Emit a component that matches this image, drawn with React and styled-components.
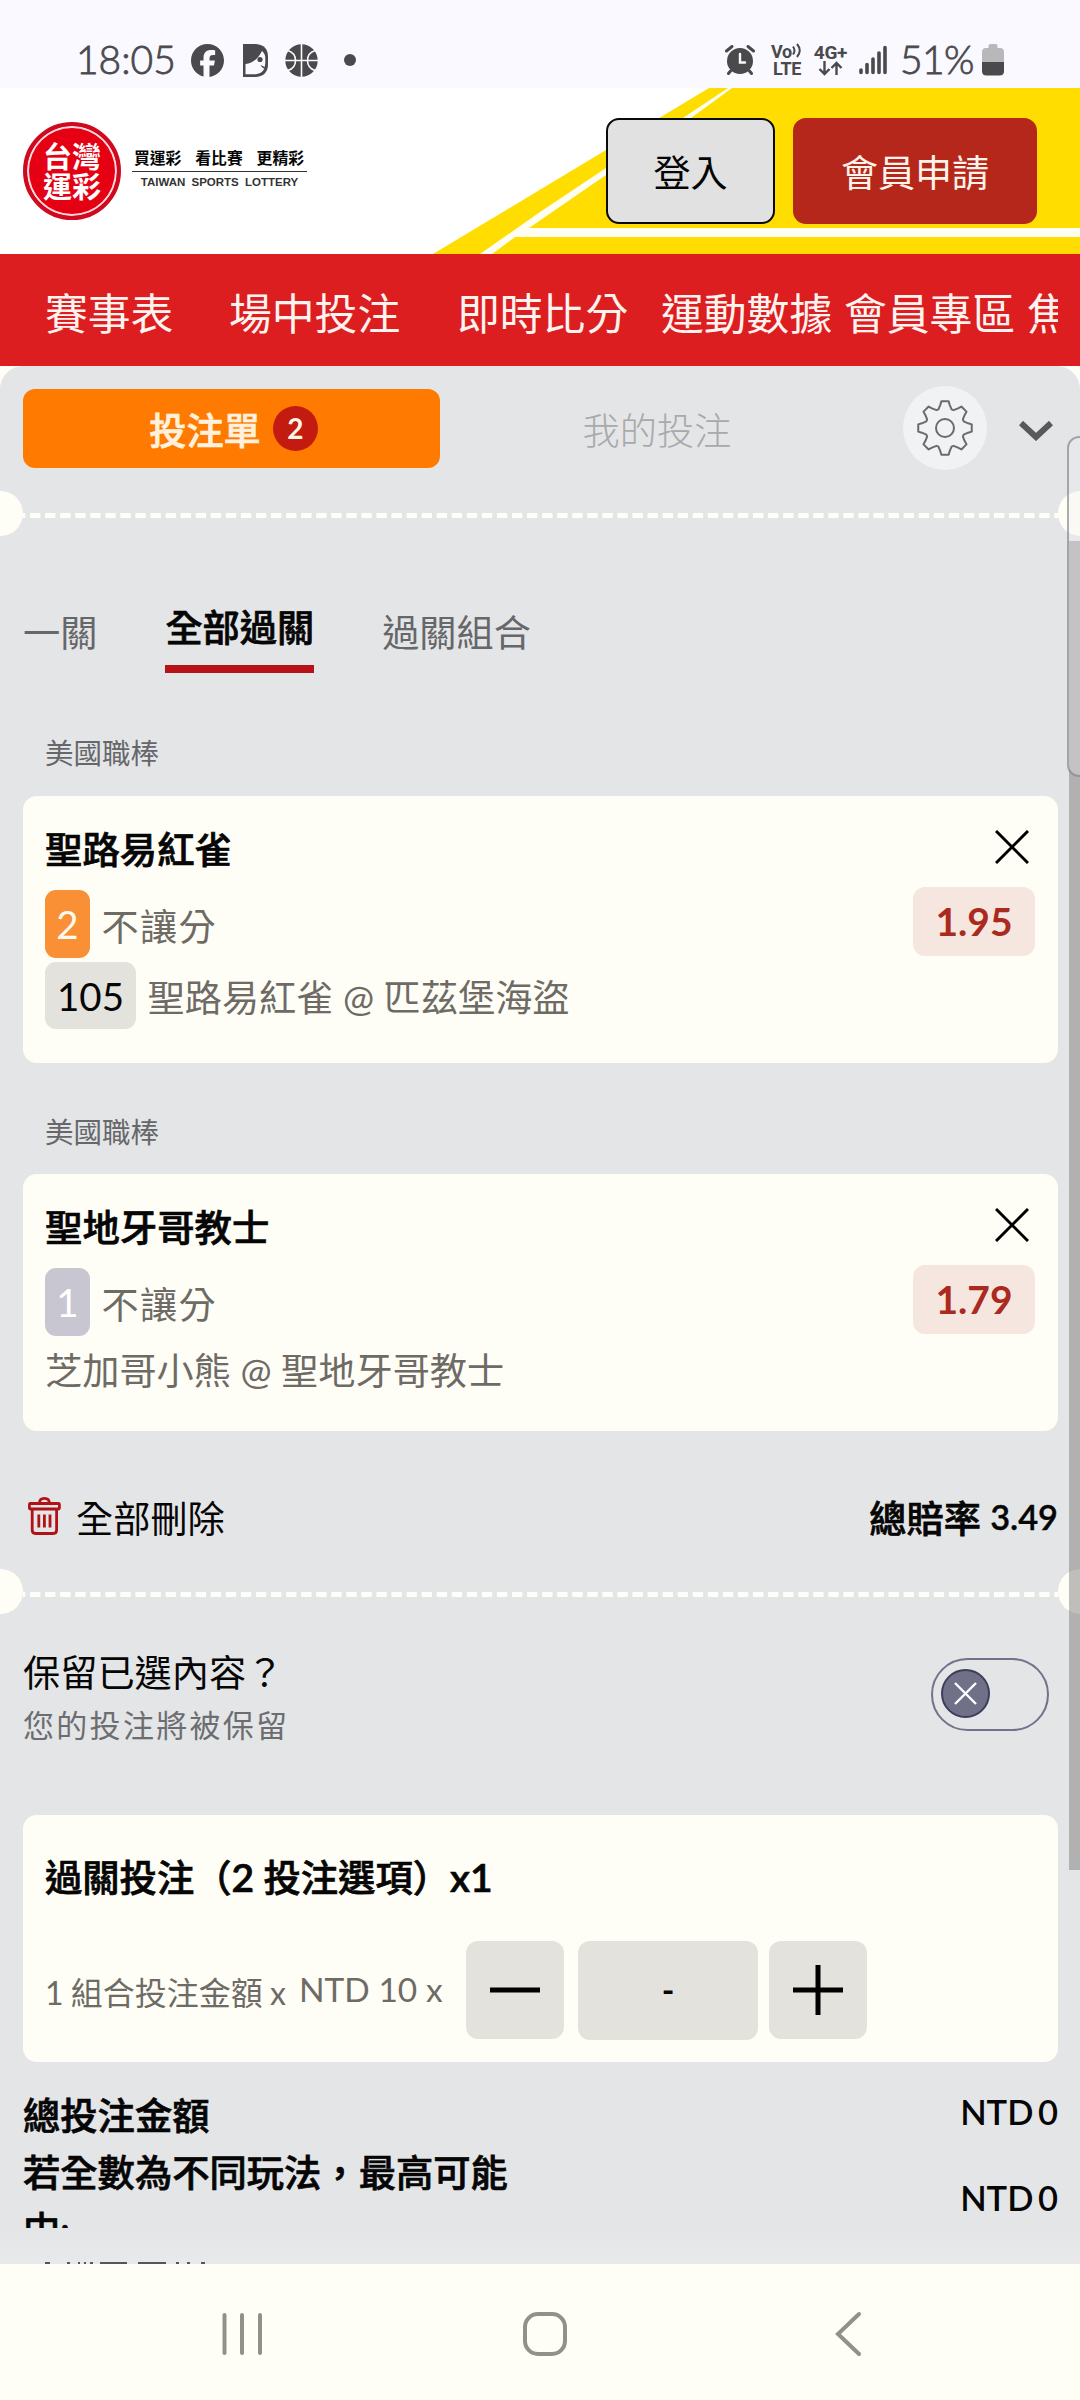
import React from "react";
import styled, { createGlobalStyle, css } from "styled-components";
import { FaFacebook } from "react-icons/fa6";

const sans = '"Lato", "Noto Sans CJK TC", sans-serif';
const ivory = "#fffef6";

const GlobalStyle = createGlobalStyle`
  * { box-sizing: border-box; }
  body { margin: 0; background: ${ivory}; font-family: ${sans}; }
  button { font-family: inherit; padding: 0; border: 0; background: none; }
`;

/* Medium glyphs thickened slightly: sits between the 500 and 700 weights. */
const strongText = css`
  font-weight: 500;
  -webkit-text-stroke: 0.7px currentColor;
`;

const Screen = styled.div`
  width: 1080px;
  height: 2400px;
  overflow: hidden;
  position: relative;
  display: flex;
  flex-direction: column;
  background: ${ivory};
  color: #060606;
`;

/* ---------- status bar ---------- */
const StatusBar = styled.div`
  height: 88px;
  flex: none;
  background: #f9f9ff;
  display: flex;
  justify-content: space-between;
  padding: 33px 76px 0 76px;
  color: #4a4a4c;
`;
const StatusGroup = styled.div`
  display: flex;
  align-items: center;
  height: 54px;
`;
const StatusText = styled.span`
  font-size: 39px;
  line-height: 54px;
  font-weight: 300;
  -webkit-text-stroke: 0.8px #4a4a4c;
  width: ${(p) => p.$w}px;
  letter-spacing: ${(p) => p.$ls || 0}px;
  white-space: nowrap;
  margin-top: -3px;
`;
const IconSlot = styled.span`
  display: flex;
  margin-left: ${(p) => p.$gap}px;
`;
const NetLabel = styled.span`
  display: flex;
  flex-direction: column;
  align-items: center;
  width: ${(p) => p.$w}px;
  margin-left: ${(p) => p.$gap}px;
  font: 700 ${(p) => p.$size}px/17px "Roboto", sans-serif;
  letter-spacing: -0.3px;
  white-space: nowrap;
`;

/* ---------- site header ---------- */
const Header = styled.header`
  height: 166px;
  flex: none;
  background: #fff;
  position: relative;
  display: flex;
  justify-content: space-between;
  padding: 30px 43px 0 23px;
`;
const HeaderArt = styled.svg`
  position: absolute;
  inset: 0;
`;
const Brand = styled.div`
  display: flex;
  margin-top: 4px;
  height: 98px;
`;
const Seal = styled.div`
  width: 98px;
  height: 98px;
  border-radius: 50%;
  background: #e60013;
  border: 4px solid #cf0a20;
  box-shadow: inset 0 0 0 2px #ffd9dc;
  color: #fff;
  display: flex;
  flex-direction: column;
  align-items: center;
  justify-content: center;
  padding-bottom: 2px;
  font: 700 29px/30px "Noto Sans CJK TC", sans-serif;
`;
const Slogan = styled.div`
  margin-left: 11px;
  width: 175px;
  padding-top: 25px;
`;
const SloganTop = styled.div`
  display: flex;
  justify-content: space-between;
  font: 700 15.8px/22px "Noto Sans CJK TC", sans-serif;
  padding: 0 3px 2px 2px;
  border-bottom: 1px solid #333;
`;
const SloganBottom = styled.div`
  font: 700 11.5px/21px "Liberation Sans", sans-serif;
  word-spacing: 3px;
  white-space: nowrap;
  text-align: center;
  color: #333;
`;
const HeaderActions = styled.div`
  display: flex;
  gap: 18px;
  position: relative;
`;
const HeaderButton = styled.button`
  height: 106px;
  width: ${(p) => p.$w}px;
  border-radius: 13px;
  font-size: 37px;
  line-height: 40px;
  padding-top: 3px;
  background: ${(p) => (p.$primary ? "#b5271a" : "#e1e1e1")};
  color: ${(p) => (p.$primary ? "#fff3ea" : "#050505")};
  border: 2px solid ${(p) => (p.$primary ? "#b5271a" : "#0a0a0a")};
`;

const NavBar = styled.nav`
  height: 112px;
  flex: none;
  background: #dc1e20;
  display: flex;
  padding: 4px 22px 0 45px;
`;
const NavTrack = styled.div`
  flex: 1;
  display: flex;
  overflow: hidden;
`;
const NavItem = styled.span`
  flex: none;
  width: ${(p) => p.$w}px;
  font-size: 42.8px;
  line-height: 112px;
  color: #fff3f0;
  white-space: nowrap;
`;

/* ---------- slip ---------- */
const Slip = styled.main`
  flex: 1;
  min-height: 0;
  background: #e4e5e7;
  border-radius: 23px 23px 0 0;
  overflow: hidden;
  padding-top: 20px;
  position: relative;
`;
const SlipHeader = styled.div`
  display: flex;
  align-items: center;
  height: 84px;
  padding-left: 23px;
`;
const SlipTab = styled.button`
  width: ${(p) => p.$w}px;
  height: 79px;
  border-radius: 12px;
  display: flex;
  align-items: center;
  justify-content: center;
  gap: 12px;
  padding-left: ${(p) => (p.$active ? 4 : 0)}px;
  font-size: 37.2px;
  font-weight: 300;
  background: ${(p) => (p.$active ? "#ff7a00" : "transparent")};
  color: ${(p) => (p.$active ? "#fff1de" : "#a8a9aa")};
`;
const TabText = styled.span`
  line-height: 44px;
  padding-top: 5px;
  ${(p) => p.$active && strongText}
`;
const Count = styled.span`
  width: 45px;
  height: 45px;
  border-radius: 50%;
  background: #c41b10;
  font-size: 28px;
  font-weight: 700;
  line-height: 44px;
  text-align: center;
  color: #fff6ea;
`;
const GearButton = styled.button`
  width: 84px;
  height: 84px;
  border-radius: 50%;
  background: #f1f2f4;
  margin-left: 29px;
  display: flex;
  align-items: center;
  justify-content: center;
`;
const ChevronButton = styled.button`
  margin-left: 32px;
  padding-top: 5px;
  display: flex;
`;

const TicketDivider = styled.div`
  display: flex;
  height: 45px;
  margin-top: ${(p) => p.$mt}px;
  overflow: hidden;
`;
const Notch = styled.i`
  flex: none;
  width: 45px;
  height: 45px;
  border-radius: 50%;
  background: ${ivory};
  margin: ${(p) => (p.$right ? "0 -23px 0 0" : "0 0 0 -22px")};
`;
const Dashes = styled.i`
  flex: 1;
  height: 5px;
  margin-top: ${(p) => p.$top}px;
  background: linear-gradient(90deg, #fffef8 10px, transparent 10px) 7px 0 / 15.07px 5px repeat-x;
`;

const TypeTabs = styled.div`
  display: flex;
  align-items: flex-start;
  gap: 68px;
  margin-top: 64px;
  padding-left: 23px;
`;
const TypeTab = styled.span`
  font-size: 37.2px;
  line-height: 56px;
  ${(p) => p.$active && strongText}
  color: ${(p) => (p.$active ? "#060606" : "#66676a")};
  margin-top: ${(p) => (p.$active ? 0 : 5)}px;
  padding-bottom: ${(p) => (p.$active ? 9 : 0)}px;
  border-bottom: ${(p) => (p.$active ? "8px solid #b71218" : "0")};
`;

const League = styled.div`
  margin-top: ${(p) => p.$mt}px;
  padding-left: 45px;
  font-size: 28.5px;
  line-height: 40px;
  color: #66676a;
`;
const Card = styled.section`
  margin: ${(p) => p.$mt}px 22px 0 23px;
  height: ${(p) => p.$h}px;
  border-radius: 14px;
  background: ${ivory};
  display: flex;
  justify-content: space-between;
  padding: 0 23px 0 22px;
`;
const Pick = styled.div`
  padding-top: 27px;
`;
const PickName = styled.div`
  font-size: 37.4px;
  ${strongText}
  line-height: 54px;
  margin-bottom: 13px;
`;
const PickLine = styled.div`
  display: flex;
  align-items: center;
  gap: 11.5px;
  height: ${(p) => p.$h}px;
  margin-bottom: 4px;
`;
const Tag = styled.span`
  height: ${(p) => p.$h || 68}px;
  min-width: 45px;
  padding: 0 ${(p) => p.$px}px;
  border-radius: 11px;
  font-size: 38.5px;
  line-height: 69px;
  text-align: center;
  background: ${(p) => p.$bg};
  color: ${(p) => p.$fg};
`;
const Muted = styled.span`
  font-size: 37.2px;
  letter-spacing: ${(p) => p.$ls || 0}px;
  line-height: 50px;
  padding-top: ${(p) => p.$pt || 0}px;
  color: #6e6b66;
  white-space: nowrap;
`;
const PickSide = styled.div`
  display: flex;
  flex-direction: column;
  align-items: flex-end;
  padding-top: 34px;
`;
const RemoveButton = styled.button`
  display: flex;
  margin: 0 6px 23px 0;
`;
const Odds = styled.span`
  width: 122px;
  height: 69px;
  border-radius: 12px;
  background: #f5e6df;
  color: #aa2a20;
  font-size: 39px;
  font-weight: 700;
  line-height: 69px;
  text-align: center;
`;

const SummaryRow = styled.div`
  display: flex;
  justify-content: space-between;
  align-items: center;
  height: 60px;
  margin-top: 56px;
  padding: 0 22px 0 28px;
`;
const ClearAll = styled.button`
  display: flex;
  align-items: center;
  gap: 15px;
  font-size: 37.2px;
  line-height: 60px;
  color: #060606;
`;
const TrashSlot = styled.span`
  display: flex;
  padding-bottom: 3px;
`;
const ClearText = styled.span`
  padding-top: 3px;
`;
const TotalOdds = styled.span`
  font-size: 37.2px;
  ${strongText}
  line-height: 60px;
  padding-top: 4px;
`;
const Figure = styled.span`
  font-size: 34.3px;
  font-weight: 600;
  -webkit-text-stroke: 0.4px currentColor;
  position: relative;
  top: -3px;
`;

const KeepRow = styled.div`
  display: flex;
  justify-content: space-between;
  margin-top: 32px;
  padding: 0 31px 0 23px;
`;
const KeepTitle = styled.div`
  font-size: 37.2px;
  line-height: 53px;
`;
const KeepNote = styled.div`
  font-size: 31px;
  letter-spacing: 2.3px;
  line-height: 53px;
  color: #6c6d70;
`;
const Toggle = styled.button`
  width: 118px;
  height: 73px;
  margin-top: 12px;
  border-radius: 37px;
  border: 2px solid #72728a;
  display: flex;
  align-items: center;
  padding: 0 0 2px 8px;
`;
const Knob = styled.span`
  width: 49px;
  height: 49px;
  border-radius: 50%;
  background: #707089;
  border: 2px solid #3f3e58;
  display: flex;
  align-items: center;
  justify-content: center;
`;

const StakeCard = styled.section`
  margin: 63px 22px 0 23px;
  height: 247px;
  border-radius: 14px;
  background: ${ivory};
  padding: 35px 22px 0;
`;
const StakeTitle = styled.div`
  font-size: 37.3px;
  ${strongText}
  height: 56px;
  line-height: 56px;
  margin-bottom: 35px;
`;
const Strong = styled.span`
  font-size: 39px;
  line-height: 1;
  font-weight: 600;
`;
const StakeRow = styled.div`
  display: flex;
  height: 99px;
  align-items: flex-start;
`;
const StakeLabel = styled.span`
  width: ${(p) => p.$w}px;
  font-size: ${(p) => p.$size}px;
  line-height: ${(p) => p.$lh}px;
  word-spacing: ${(p) => p.$ws || 0}px;
  color: #6e6b66;
  white-space: nowrap;
`;
const StepButton = styled.button`
  width: 98px;
  height: 98px;
  border-radius: 12px;
  background: #e4e2dd;
  display: flex;
  align-items: center;
  justify-content: center;
`;
const StakeValue = styled.span`
  width: 180px;
  height: 99px;
  margin: 0 11px 0 14px;
  border-radius: 12px;
  background: #e4e2dd;
  font-size: 34px;
  line-height: 98px;
  text-align: center;
  font-weight: 700;
`;

const Totals = styled.div`
  margin-top: 25px;
  height: 141px;
  overflow: hidden;
  padding: 0 22px 0 23px;
`;
const TotalRow = styled.div`
  display: flex;
  justify-content: space-between;
  align-items: center;
`;
const TotalName = styled.span`
  font-size: 37.3px;
  ${strongText}
  line-height: 57px;
  max-width: 500px;
`;
const TotalValue = styled.span`
  font-size: 34.5px;
  font-weight: 600;
  line-height: 48px;
  padding-bottom: 7px;
  word-spacing: -4px;
`;
const FadeEdge = styled.div`
  height: 36px;
  background: linear-gradient(#e4e5e7, #e8e9eb);
  display: flex;
  align-items: flex-end;
  padding-left: 23px;
`;

/* Overlays the slip along the right edge of the window. */
const ScrollThumb = styled.i`
  position: absolute;
  right: 0;
  top: 541px;
  width: 11px;
  height: 1329px;
  background: rgba(125, 125, 125, 0.5);
`;
const EdgeHandle = styled.i`
  position: absolute;
  right: -14px;
  top: 436px;
  width: 27px;
  height: 341px;
  border: 2px solid rgba(120, 120, 120, 0.6);
  border-radius: 12px;
  background: rgba(240, 240, 245, 0.3);
`;

const SystemNav = styled.footer`
  height: 136px;
  flex: none;
  background: ${ivory};
  display: flex;
  align-items: center;
  justify-content: space-between;
  padding: 4px 218px 0 220px;
`;
const NavButton = styled.button`
  display: flex;
  flex: none;
  margin-right: ${(p) => p.$mr || 0}px;
`;

/* ---------- icons ---------- */
const CharacterIcon = () => (
  <svg width="25" height="33" viewBox="0 0 25 33">
    <path d="M0 0H13Q25 1 25 13V20Q25 32 13 33H0Z" fill="#4a4a4c" />
    <path d="M2.500 20Q13 19 19 7Q22.300 10 22.300 14V19Q22 29.500 13 30.300H2.500Z" fill="#f9f9ff" />
    <circle cx="17" cy="15.500" r="2.600" fill="#4a4a4c" />
    <path d="M17.500 21L23 23.500V25Q19 24.500 17.500 21Z" fill="#4a4a4c" />
  </svg>
);
const BallIcon = () => (
  <svg width="33" height="33" viewBox="0 0 33 33">
    <circle cx="16.500" cy="16.500" r="16.200" fill="#4a4a4c" />
    <g fill="none" stroke="#f9f9ff" strokeWidth="1.600">
      <path d="M16.500 0V33M0 16.500H33" />
      <path d="M3 6.500Q10.500 9 10.500 16.500T3 26.500M30 6.500Q22.500 9 22.500 16.500T30 26.500" />
    </g>
  </svg>
);
const DotIcon = () => (
  <svg width="12" height="12"><circle cx="6" cy="6" r="6" fill="#4a4a4c" /></svg>
);
const AlarmIcon = () => (
  <svg width="30" height="30" viewBox="0 0 30 30" fill="none" stroke="#4a4a4c" strokeLinecap="round">
    <circle cx="15" cy="16" r="13" fill="#4a4a4c" stroke="none" />
    <path d="M1.500 6L7 1.500M28.500 6L23 1.500M5.500 26L3.500 28.500M24.500 26L26.500 28.500" strokeWidth="3" />
    <path d="M15 9V17.500H20" stroke="#f9f9ff" strokeWidth="2.400" />
  </svg>
);
const WavesIcon = () => (
  <svg width="11" height="15" viewBox="0 0 11 15" fill="none" stroke="#4a4a4c" strokeWidth="2">
    <path d="M1 3.500Q4 7.500 1 11.500M5 1Q10.500 7.500 5 14" />
  </svg>
);
const ArrowsIcon = () => (
  <svg width="26" height="15" viewBox="0 0 26 15" fill="none" stroke="#4a4a4c" strokeWidth="2.400">
    <path d="M6.500 0V13M1.500 8L6.500 13L11.500 8M18.500 14V2M13.500 7L18.500 2L23.500 7" />
  </svg>
);
const SignalIcon = () => (
  <svg width="28" height="30" viewBox="0 0 28 30" stroke="#4a4a4c" strokeWidth="3.600" strokeLinecap="round">
    <path d="M2 25V27.500M8 19.500V27.500M14 14V27.500M20 8V27.500M26 2.500V27.500" />
  </svg>
);
const BatteryIcon = () => (
  <svg width="22" height="32" viewBox="0 0 22 32">
    <path d="M6.500 2Q6.500 0 8.500 0H13.500Q15.500 0 15.500 2V4H18Q22 4 22 8V18H0V8Q0 4 4 4H6.500Z" fill="#b8b8bb" />
    <path d="M0 18H22V27Q22 31.500 17.500 31.500H4.500Q0 31.500 0 27Z" fill="#4a4a4c" />
  </svg>
);

const polar = (angle, radius) =>
  `${(28 + radius * Math.sin(angle)).toFixed(2)} ${(28 - radius * Math.cos(angle)).toFixed(2)}`;
const gearPath =
  Array.from({ length: 8 }, (_, i) => {
    const a = (i * Math.PI) / 4;
    return `${i ? "L" : "M"}${polar(a - 0.34, 19.800)}L${polar(a - 0.2, 23.600)}L${polar(a - 0.135, 27)}L${polar(a + 0.135, 27)}L${polar(a + 0.2, 23.600)}L${polar(a + 0.34, 19.800)}`;
  }).join("") + "Z";
const GearIcon = () => (
  <svg width="56" height="56" viewBox="0 0 56 56" fill="none" stroke="#6a6b6d" strokeWidth="2" strokeLinejoin="round">
    <path d={gearPath} />
    <circle cx="28" cy="28" r="9" />
  </svg>
);
const ChevronIcon = () => (
  <svg width="34" height="20" viewBox="0 0 34 20" fill="none" stroke="#58595b" strokeWidth="6">
    <path d="M2 2L17 16L32 2" />
  </svg>
);
const CrossIcon = ({ size, color, width }) => (
  <svg width={size} height={size} viewBox={`0 0 ${size} ${size}`} stroke={color} strokeWidth={width}>
    <path d={`M1 1L${size - 1} ${size - 1}M${size - 1} 1L1 ${size - 1}`} />
  </svg>
);
const TrashIcon = () => (
  <svg width="33" height="38" viewBox="0 0 33 38" fill="none" stroke="#b01217" strokeWidth="2.800">
    <rect x="1.400" y="6.500" width="30" height="5.500" rx="1" />
    <path d="M11.500 6Q11.500 1.400 16.400 1.400T21.300 6" />
    <path d="M4.200 12.500V33Q4.200 36.500 7.500 36.500H25.300Q28.600 36.500 28.600 33V12.500" />
    <path d="M10.800 17.500V30.500M16.400 17.500V30.500M22 17.500V30.500" />
  </svg>
);
const StepIcon = ({ plus }) => (
  <svg width="50" height="50" viewBox="0 0 50 50" stroke="#000" strokeWidth="5">
    <path d={plus ? "M0 25H50M25 0V50" : "M0 25H50"} />
  </svg>
);
const PeekMarks = () => (
  <svg width="190" height="2" viewBox="0 0 190 2" stroke="#55565a" strokeWidth="2">
    <path d="M22 1H27M44 1H47M55 1H57M61 1H63M67 1H70M77 1H104M115 1H143M153 1H156M164 1H167M178 1H182" />
  </svg>
);
const RecentsIcon = () => (
  <svg width="44" height="44" viewBox="0 0 44 44" stroke="#91908b" strokeWidth="4" strokeLinecap="round">
    <path d="M4.500 3V41M22 3V41M40 3V41" />
  </svg>
);
const HomeIcon = () => (
  <svg width="46" height="46" viewBox="0 0 46 46" fill="none" stroke="#91908b" strokeWidth="4">
    <rect x="3" y="3" width="40" height="40" rx="13" />
  </svg>
);
const BackIcon = () => (
  <svg width="28" height="46" viewBox="0 0 28 46" fill="none" stroke="#91908b" strokeWidth="4" strokeLinecap="round">
    <path d="M25 3L4 23L25 43" />
  </svg>
);

/* ---------- data ---------- */
const navItems = [
  ["賽事表", 184],
  ["場中投注", 228],
  ["即時比分", 204],
  ["運動數據", 183],
  ["會員專區", 183],
  ["焦點", 86],
];
const picks = [
  {
    league: "美國職棒", gapTop: 60, gapCard: 23, height: 267,
    name: "聖路易紅雀", no: "2", noBg: "#f99035", noFg: "#fffaf0",
    odds: "1.95", code: "105", match: "聖路易紅雀 @ 匹茲堡海盜",
  },
  {
    league: "美國職棒", gapTop: 49, gapCard: 22, height: 257,
    name: "聖地牙哥教士", no: "1", noBg: "#c8c6d0", noFg: "#ffffff",
    odds: "1.79", match: "芝加哥小熊 @ 聖地牙哥教士",
  },
];

const Divider = ({ mt, top }) => (
  <TicketDivider $mt={mt}>
    <Notch />
    <Dashes $top={top} />
    <Notch $right />
  </TicketDivider>
);

const PickCard = ({ pick }) => (
  <>
    <League $mt={pick.gapTop}>{pick.league}</League>
    <Card $h={pick.height} $mt={pick.gapCard}>
      <Pick>
        <PickName>{pick.name}</PickName>
        <PickLine $h={68}>
          <Tag $px={11} $bg={pick.noBg} $fg={pick.noFg}>{pick.no}</Tag>
          <Muted $ls={1.3} $pt={5}>不讓分</Muted>
        </PickLine>
        <PickLine $h={pick.code ? 67 : 62}>
          {pick.code && <Tag $px={12} $h={67} $bg="#e4e2dd" $fg="#060606">{pick.code}</Tag>}
          <Muted $pt={pick.code ? 4 : 0}>{pick.match}</Muted>
        </PickLine>
      </Pick>
      <PickSide>
        <RemoveButton><CrossIcon size={34} color="#000" width={3} /></RemoveButton>
        <Odds>{pick.odds}</Odds>
      </PickSide>
    </Card>
  </>
);

export default function App() {
  return (
    <Screen>
      <GlobalStyle />
      <StatusBar>
        <StatusGroup>
          <StatusText $w={100}>18:05</StatusText>
          <IconSlot $gap={15}><FaFacebook size={33} /></IconSlot>
          <IconSlot $gap={19}><CharacterIcon /></IconSlot>
          <IconSlot $gap={17}><BallIcon /></IconSlot>
          <IconSlot $gap={26}><DotIcon /></IconSlot>
        </StatusGroup>
        <StatusGroup>
          <IconSlot $gap={0}><AlarmIcon /></IconSlot>
          <NetLabel $w={32} $gap={16} $size={18}>
            <span>Vo<WavesIcon /></span>
            <span>LTE</span>
          </NetLabel>
          <NetLabel $w={33} $gap={11} $size={19}>
            <span>4G+</span>
            <ArrowsIcon />
          </NetLabel>
          <IconSlot $gap={12}><SignalIcon /></IconSlot>
          <IconSlot $gap={13}><StatusText $w={75} $ls={-0.6}>51%</StatusText></IconSlot>
          <IconSlot $gap={7}><BatteryIcon /></IconSlot>
        </StatusGroup>
      </StatusBar>

      <Header>
        <HeaderArt width="1080" height="166" viewBox="0 0 1080 166">
          <path d="M433 166L709 0H1080V166Z" fill="#ffdd00" />
          <path d="M480 166L540 124L606 80L683 30L728 0H732L691 30L606 87L529 140H1080V149H515L492 166Z" fill="#fffef2" />
        </HeaderArt>
        <Brand>
          <Seal><span>台灣</span><span>運彩</span></Seal>
          <Slogan>
            <SloganTop><span>買運彩</span><span>看比賽</span><span>更精彩</span></SloganTop>
            <SloganBottom>TAIWAN SPORTS LOTTERY</SloganBottom>
          </Slogan>
        </Brand>
        <HeaderActions>
          <HeaderButton $w={169}>登入</HeaderButton>
          <HeaderButton $w={244} $primary>會員申請</HeaderButton>
        </HeaderActions>
      </Header>

      <NavBar>
        <NavTrack>
          {navItems.map(([label, w]) => <NavItem key={label} $w={w}>{label}</NavItem>)}
        </NavTrack>
      </NavBar>

      <Slip>
        <SlipHeader>
          <SlipTab $w={417} $active>
            <TabText $active>投注單</TabText>
            <Count>2</Count>
          </SlipTab>
          <SlipTab $w={434}><TabText>我的投注</TabText></SlipTab>
          <GearButton><GearIcon /></GearButton>
          <ChevronButton><ChevronIcon /></ChevronButton>
        </SlipHeader>
        <Divider mt={21} top={22} />

        <TypeTabs>
          <TypeTab>一關</TypeTab>
          <TypeTab $active>全部過關</TypeTab>
          <TypeTab>過關組合</TypeTab>
        </TypeTabs>

        {picks.map((pick) => <PickCard key={pick.name} pick={pick} />)}

        <SummaryRow>
          <ClearAll>
            <TrashSlot><TrashIcon /></TrashSlot>
            <ClearText>全部刪除</ClearText>
          </ClearAll>
          <TotalOdds>總賠率 <Figure>3.49</Figure></TotalOdds>
        </SummaryRow>
        <Divider mt={22} top={23} />

        <KeepRow>
          <div>
            <KeepTitle>保留已選內容？</KeepTitle>
            <KeepNote>您的投注將被保留</KeepNote>
          </div>
          <Toggle><Knob><CrossIcon size={23} color="#fff" width={2.4} /></Knob></Toggle>
        </KeepRow>

        <StakeCard>
          <StakeTitle>過關投注（<Strong>2</Strong> 投注選項）<Strong>x1</Strong></StakeTitle>
          <StakeRow>
            <StakeLabel $w={254} $size={32} $lh={103} $ws={-1}>1 組合投注金額 x</StakeLabel>
            <StakeLabel $w={127} $size={33.5} $lh={96}>NTD 10</StakeLabel>
            <StakeLabel $w={40} $size={33.5} $lh={96}>x</StakeLabel>
            <StepButton><StepIcon /></StepButton>
            <StakeValue>-</StakeValue>
            <StepButton><StepIcon plus /></StepButton>
          </StakeRow>
        </StakeCard>

        <Totals>
          <TotalRow>
            <TotalName>總投注金額</TotalName>
            <TotalValue>NTD 0</TotalValue>
          </TotalRow>
          <TotalRow>
            <TotalName>若全數為不同玩法，最高可能中:</TotalName>
            <TotalValue>NTD 0</TotalValue>
          </TotalRow>
        </Totals>
        <FadeEdge><PeekMarks /></FadeEdge>
      </Slip>

      <SystemNav>
        <NavButton><RecentsIcon /></NavButton>
        <NavButton $mr={8}><HomeIcon /></NavButton>
        <NavButton><BackIcon /></NavButton>
      </SystemNav>

      <ScrollThumb />
      <EdgeHandle />
    </Screen>
  );
}
